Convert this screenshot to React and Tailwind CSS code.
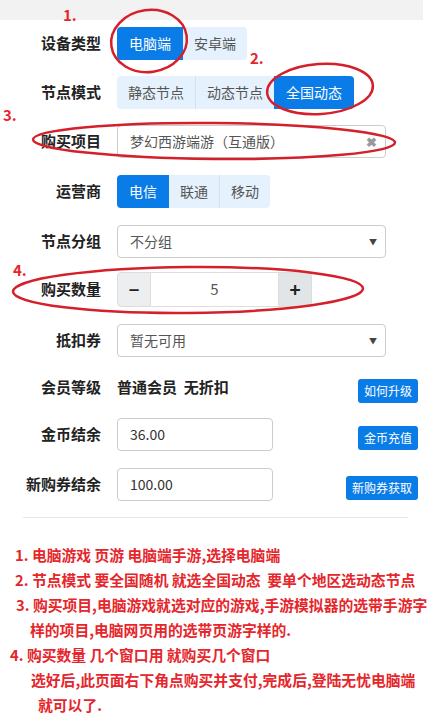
import React from 'react';

const Label = ({ children }) => (
  <div className="w-[101px] shrink-0 text-right text-[15px] font-bold text-[#222]">{children}</div>
);

const Group = ({ items, active }) => (
  <div className="flex h-[33px] rounded-[4px] overflow-hidden">
    {items.map((t, i) => (
      <div
        key={t}
        className={
          i === active
            ? 'flex items-center px-[12px] bg-[#0a7ce8] text-white text-[14px]'
            : `flex items-center px-[11px] bg-[#e5f1fc] text-[#555] text-[14px] ${i > 0 && i !== active + 1 ? 'border-l border-[#cfe2f3]' : ''}`
        }
      >
        {t}
      </div>
    ))}
  </div>
);

const Select = ({ value, clear }) => (
  <div className="flex items-center justify-between w-[269px] h-[33px] border border-[#ccc] rounded-[4px] pl-[12px] pr-[8px] text-[14px] text-[#555]">
    <span>{value}</span>
    {clear ? (
      <span className="text-[#999] text-[13px] font-bold">✖</span>
    ) : (
      <span className="text-[#444] text-[8px]">▼</span>
    )}
  </div>
);

const SmallBtn = ({ children }) => (
  <div className="ml-auto self-end mb-[1px] h-[24px] px-[6px] flex items-center rounded-[3px] bg-[#0a7ce8] text-white text-[12px]">
    {children}
  </div>
);

const notes = [
  { x: 'pl-[15px]', t: '1. 电脑游戏 页游 电脑端手游,选择电脑端' },
  { x: 'pl-[15px]', t: '2. 节点模式 要全国随机 就选全国动态  要单个地区选动态节点' },
  { x: 'pl-[16px]', t: '3. 购买项目,电脑游戏就选对应的游戏,手游模拟器的选带手游字' },
  { x: 'pl-[30px]', t: '样的项目,电脑网页用的选带页游字样的.' },
  { x: 'pl-[10px]', t: '4. 购买数量 几个窗口用 就购买几个窗口' },
  { x: 'pl-[31px]', t: '选好后,此页面右下角点购买并支付,完成后,登陆无忧电脑端' },
  { x: 'pl-[38px]', t: '就可以了.' },
];

export default function App() {
  return (
    <div className="relative w-[438px] h-[723px] bg-white overflow-hidden font-['Noto_Sans_CJK_SC','Microsoft_YaHei',sans-serif]">
      <div className="w-[423px] h-[20px] bg-[#f2f2f2]" />

      <div className="flex flex-col pr-[20px]">
        <div className="flex items-center gap-[16px] h-[33px] mt-[7px]">
          <Label>设备类型</Label>
          <Group items={['电脑端', '安卓端']} active={0} />
        </div>
        <div className="flex items-center gap-[16px] h-[33px] mt-[16px]">
          <Label>节点模式</Label>
          <Group items={['静态节点', '动态节点', '全国动态']} active={2} />
        </div>
        <div className="flex items-center gap-[16px] h-[33px] mt-[16px]">
          <Label>购买项目</Label>
          <Select value="梦幻西游端游（互通版）" clear />
        </div>
        <div className="flex items-center gap-[16px] h-[33px] mt-[17px]">
          <Label>运营商</Label>
          <Group items={['电信', '联通', '移动']} active={0} />
        </div>
        <div className="flex items-center gap-[16px] h-[33px] mt-[17px]">
          <Label>节点分组</Label>
          <Select value="不分组" />
        </div>
        <div className="flex items-center gap-[16px] h-[35px] mt-[14px]">
          <Label>购买数量</Label>
          <div className="flex h-[35px]">
            <div className="w-[34px] flex items-center justify-center bg-[#eceef0] border border-[#ddd] rounded-l-[4px] text-[18px] font-bold text-[#222]">−</div>
            <div className="w-[127px] flex items-center justify-center border-y border-[#ddd] text-[15px] text-[#555]">5</div>
            <div className="w-[34px] flex items-center justify-center bg-[#e2e5e8] border border-[#ddd] rounded-r-[4px] text-[19px] font-bold text-[#222]">+</div>
          </div>
        </div>
        <div className="flex items-center gap-[16px] h-[33px] mt-[17px]">
          <Label>抵扣券</Label>
          <Select value="暂无可用" />
        </div>
        <div className="flex items-center gap-[16px] h-[33px] mt-[14px]">
          <Label>会员等级</Label>
          <div className="text-[15px] font-bold text-[#222] whitespace-pre">普通会员  无折扣</div>
          <SmallBtn>如何升级</SmallBtn>
        </div>
        <div className="flex items-center gap-[16px] h-[33px] mt-[14px]">
          <Label>金币结余</Label>
          <div className="w-[156px] h-[33px] flex items-center pl-[12px] border border-[#ccc] rounded-[4px] text-[14px] text-[#333]">36.00</div>
          <SmallBtn>金币充值</SmallBtn>
        </div>
        <div className="flex items-center gap-[16px] h-[33px] mt-[17px]">
          <Label>新购券结余</Label>
          <div className="w-[156px] h-[33px] flex items-center pl-[12px] border border-[#ccc] rounded-[4px] text-[14px] text-[#333]">100.00</div>
          <SmallBtn>新购券获取</SmallBtn>
        </div>
      </div>

      <div className="ml-[23px] w-[385px] h-px bg-[#dde7ef] mt-[16px]" />

      <div className="flex flex-col mt-[24px] text-[14.8px] font-bold text-[#e5262b] leading-[25px]">
        {notes.map((n) => (
          <div key={n.t} className={`${n.x} whitespace-pre`}>{n.t}</div>
        ))}
      </div>

      {/* annotation marks */}
      <div className="absolute left-[63px] top-[4px] text-[15px] font-bold text-[#e5262b]">1.</div>
      <div className="absolute left-[250px] top-[47px] text-[15px] font-bold text-[#e5262b]">2.</div>
      <div className="absolute left-[3px] top-[104px] text-[15px] font-bold text-[#e5262b]">3.</div>
      <div className="absolute left-[13px] top-[259px] text-[15px] font-bold text-[#e5262b]">4.</div>
      <svg className="absolute left-0 top-0 pointer-events-none" width="438" height="723" fill="none" stroke="#d4202b" strokeWidth="2.5">
        <ellipse cx="149" cy="41" rx="38" ry="31" transform="rotate(-8 149 41)" />
        <ellipse cx="320" cy="89" rx="53" ry="25" transform="rotate(-4 320 89)" />
        <ellipse cx="214" cy="141" rx="181" ry="18" transform="rotate(0.5 214 141)" />
        <ellipse cx="188" cy="290" rx="175" ry="23" transform="rotate(-0.5 188 290)" />
      </svg>
    </div>
  );
}
